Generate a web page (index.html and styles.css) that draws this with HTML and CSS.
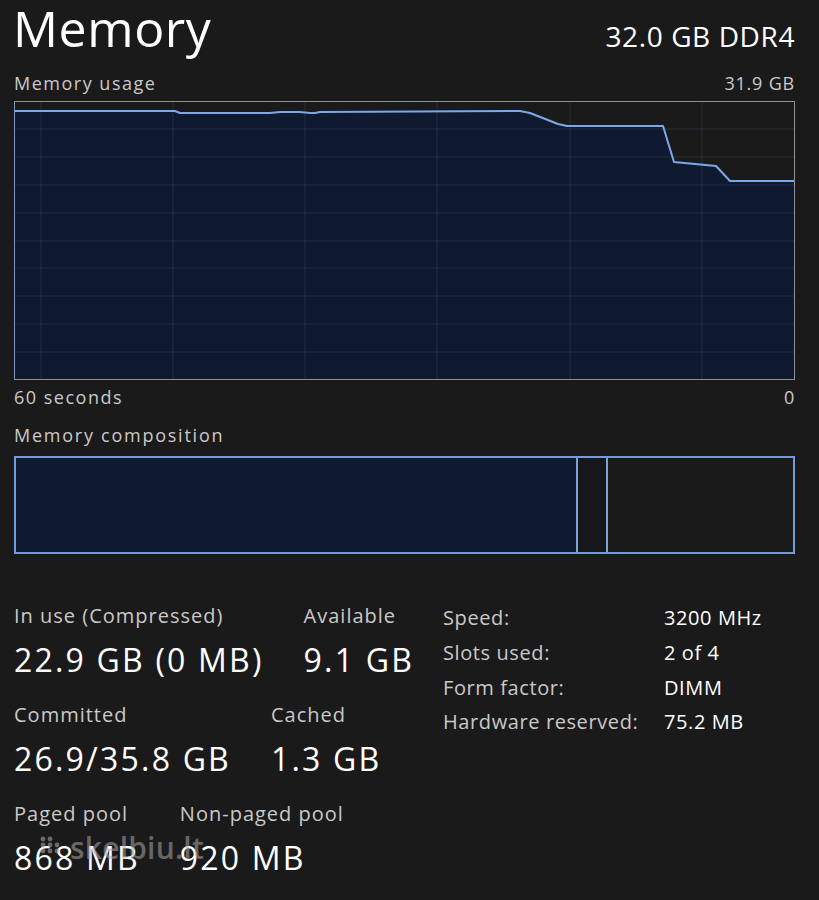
FILE: index.html
```html
<!DOCTYPE html>
<html lang="en">
<head>
<meta charset="utf-8">
<title>Memory</title>
<link rel="stylesheet" href="styles.css">
</head>
<body>
<main class="page">
  <header class="head">
    <h1 class="title">Memory</h1>
    <div class="spec">32.0 GB DDR4</div>
  </header>

  <div class="caption-row top-caption">
    <span>Memory usage</span>
    <span>31.9 GB</span>
  </div>
  <div class="chart">
    <svg class="chart-svg" width="781" height="279" viewBox="0 0 781 279">
      <polygon class="area" points="0,10 161,10 166,12 256,12 266,11 286,11 296,12 301,12 306,11 506,10 516,12 544,23 553,25 649,25 660,61 702,65 716,80 781,80 781,279 0,279"/>
      <g class="grid">
        <line x1="0" y1="28" x2="781" y2="28"/>
        <line x1="0" y1="56" x2="781" y2="56"/>
        <line x1="0" y1="84" x2="781" y2="84"/>
        <line x1="0" y1="112" x2="781" y2="112"/>
        <line x1="0" y1="140" x2="781" y2="140"/>
        <line x1="0" y1="167" x2="781" y2="167"/>
        <line x1="0" y1="195" x2="781" y2="195"/>
        <line x1="0" y1="223" x2="781" y2="223"/>
        <line x1="0" y1="251" x2="781" y2="251"/>
        <line x1="27" y1="0" x2="27" y2="279"/>
        <line x1="159" y1="0" x2="159" y2="279"/>
        <line x1="291" y1="0" x2="291" y2="279"/>
        <line x1="423" y1="0" x2="423" y2="279"/>
        <line x1="556" y1="0" x2="556" y2="279"/>
        <line x1="688" y1="0" x2="688" y2="279"/>
      </g>
      <polyline class="trace" points="0,10 161,10 166,12 256,12 266,11 286,11 296,12 301,12 306,11 506,10 516,12 544,23 553,25 649,25 660,61 702,65 716,80 781,80"/>
    </svg>
  </div>
  <div class="caption-row">
    <span>60 seconds</span>
    <span>0</span>
  </div>

  <div class="caption-row comp-caption">
    <span>Memory composition</span>
  </div>
  <div class="composition">
    <div class="seg seg-inuse"></div>
    <div class="seg seg-modified"></div>
    <div class="seg seg-standby"></div>
  </div>

  <section class="stats">
    <div class="stat-col">
      <div class="stat-row">
        <div class="stat">
          <div class="label">In use (Compressed)</div>
          <div class="value">22.9 GB (0 MB)</div>
        </div>
        <div class="stat">
          <div class="label">Available</div>
          <div class="value">9.1 GB</div>
        </div>
      </div>
      <div class="stat-row">
        <div class="stat">
          <div class="label">Committed</div>
          <div class="value">26.9/35.8 GB</div>
        </div>
        <div class="stat">
          <div class="label">Cached</div>
          <div class="value">1.3 GB</div>
        </div>
      </div>
      <div class="stat-row">
        <div class="stat">
          <div class="label">Paged pool</div>
          <div class="value">868 MB</div>
        </div>
        <div class="stat">
          <div class="label">Non-paged pool</div>
          <div class="value">920 MB</div>
        </div>
      </div>
    </div>
    <dl class="props">
      <dt>Speed:</dt><dd>3200 MHz</dd>
      <dt>Slots used:</dt><dd>2 of 4</dd>
      <dt>Form factor:</dt><dd>DIMM</dd>
      <dt>Hardware reserved:</dt><dd>75.2 MB</dd>
    </dl>
  </section>

  <div class="watermark" aria-hidden="true">
    <svg class="wm-dots" width="20" height="18" viewBox="0 0 20 18">
      <circle cx="3" cy="3" r="2.4"/><circle cx="10" cy="3" r="2.4"/>
      <circle cx="3" cy="9" r="2.4"/><circle cx="10" cy="9" r="2.4"/><circle cx="17" cy="9" r="2.4"/>
      <circle cx="3" cy="15" r="2.4"/><circle cx="10" cy="15" r="2.4"/><circle cx="17" cy="15" r="2.4"/>
    </svg>
    <span class="wm-text">skelbiu.lt</span>
  </div>
</main>
</body>
</html>
```

FILE: styles.css
```css
* { box-sizing: border-box; }

html, body {
  margin: 0;
  padding: 0;
  background: #1b1a1a;
}

body {
  font-family: "Open Sans", "Noto Sans", sans-serif;
  color: #ffffff;
  width: 819px;
  height: 900px;
  overflow: hidden;
}

.page {
  position: relative;
  width: 819px;
  height: 900px;
  padding: 0 24px 0 14px;
}

.head {
  display: flex;
  justify-content: space-between;
  align-items: baseline;
  height: 66px;
}

.title {
  margin: -4px 0 0 -1px;
  font-weight: 400;
  font-size: 50px;
  line-height: 64px;
  letter-spacing: 0.6px;
  color: #ffffff;
}

.spec {
  font-size: 28px;
  line-height: 40px;
  letter-spacing: 0.6px;
  color: #ffffff;
}

.caption-row {
  display: flex;
  justify-content: space-between;
  align-items: center;
  font-size: 18px;
  line-height: 34px;
  letter-spacing: 1.5px;
  color: #c9c9c9;
  height: 34px;
}

.caption-row span:last-child { letter-spacing: 0.8px; }

.top-caption {
  height: 35px;
  align-items: flex-end;
  padding-bottom: 1px;
}

.comp-caption {
  height: 40px;
  margin-top: 1px;
}

.comp-caption span:last-child { letter-spacing: 1.75px; }

.chart {
  width: 781px;
  height: 279px;
  border: 1px solid #8e9198;
  border-left-color: #7f96c0;
  position: relative;
  overflow: hidden;
}

.chart-svg {
  display: block;
  position: absolute;
  left: -1px;
  top: -1px;
}

.area { fill: #0f1a30; }

.grid line {
  stroke: rgba(130, 150, 185, 0.16);
  stroke-width: 1;
}

.trace {
  fill: none;
  stroke: #7da8e8;
  stroke-width: 2;
  stroke-linejoin: round;
}

.composition {
  display: flex;
  width: 781px;
  height: 98px;
  border: 2px solid #6f9be0;
  margin-top: 1px;
}

.seg { height: 100%; }

.seg-inuse {
  width: 562px;
  background: #0f1a30;
  border-right: 2px solid #7ea3d9;
}

.seg-modified {
  width: 30px;
  background: #15171d;
  border-right: 2px solid #7ea3d9;
}

.seg-standby {
  flex: 1;
  background: #1b1a1a;
}

.stats {
  display: flex;
  margin-top: 47px;
}

.stat-col {
  width: 429px;
  display: flex;
  flex-direction: column;
}

.stat-row {
  display: flex;
  gap: 40px;
  height: 99px;
}

.stat .label {
  font-size: 20px;
  line-height: 30px;
  letter-spacing: 1px;
  color: #c9c9c9;
}

.stat .value {
  font-size: 32px;
  line-height: 44px;
  letter-spacing: 2.2px;
  margin-top: 7px;
  color: #ffffff;
}

.props {
  margin: 0;
  display: grid;
  grid-template-columns: 221px auto;
  grid-auto-rows: 34.7px;
  align-items: center;
  font-size: 20px;
  line-height: 30px;
  letter-spacing: 0.6px;
}

.props dt {
  color: #c9c9c9;
  margin: 0;
}

.props dd {
  color: #ffffff;
  margin: 0;
}

.watermark {
  position: absolute;
  left: 40px;
  top: 830px;
  display: flex;
  align-items: center;
  gap: 10px;
  pointer-events: none;
}

.wm-dots {
  margin-top: -6px;
}

.wm-text {
  color: rgba(170, 170, 175, 0.55);
  font-family: "Open Sans", sans-serif;
  font-weight: 600;
  font-size: 30px;
  line-height: 36px;
  letter-spacing: 0.2px;
}

.wm-dots circle { fill: rgba(170, 170, 175, 0.55); }
```
